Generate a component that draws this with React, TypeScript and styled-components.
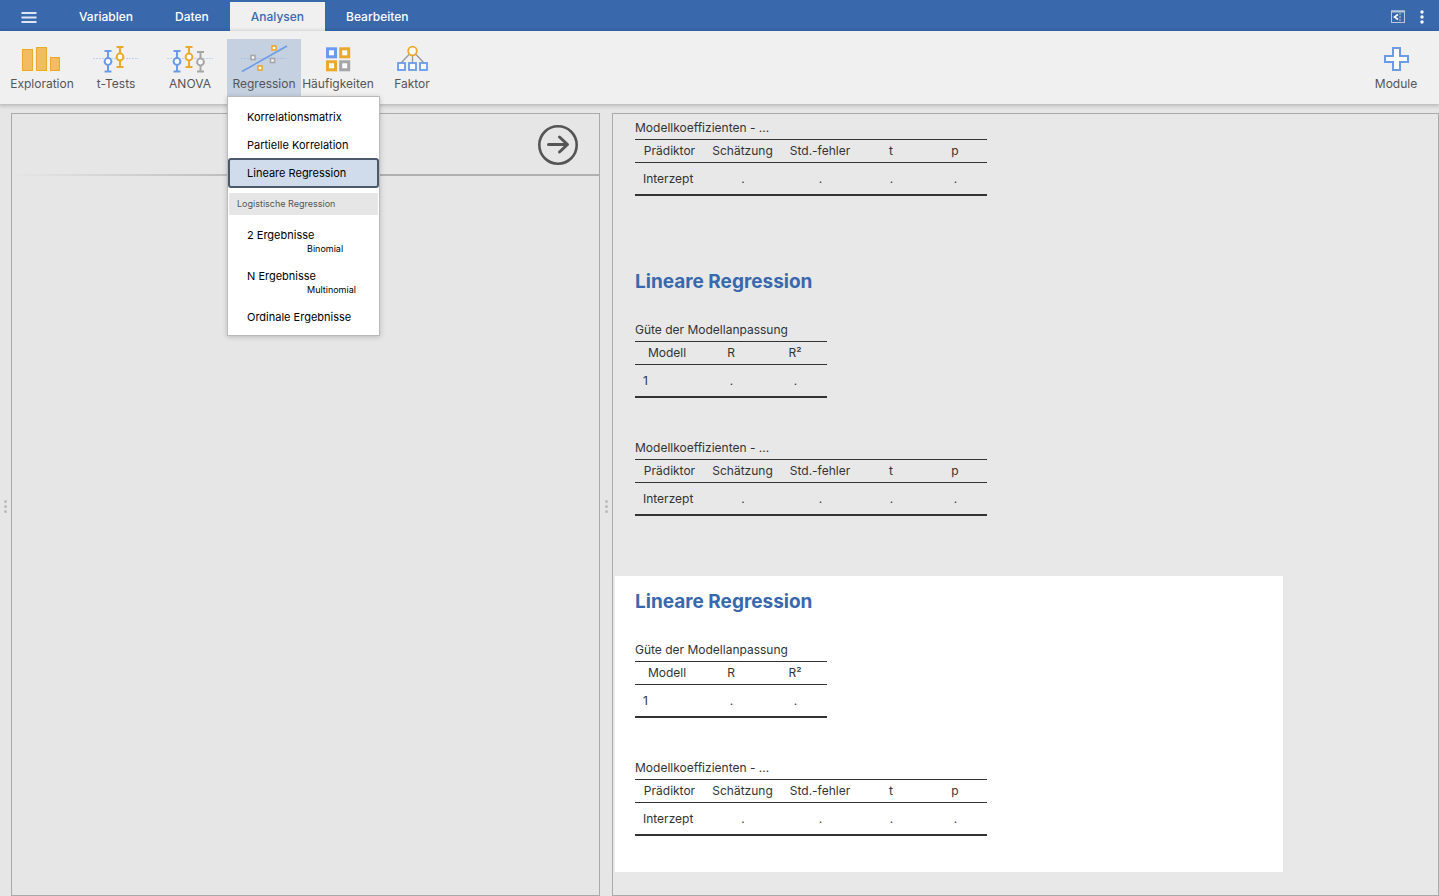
import React from 'react';
import styled, { createGlobalStyle } from 'styled-components';

const BLUE = '#3968ad';
const ICON_BLUE = '#6b9be8';
const ICON_ORANGE = '#eba92c';
const ICON_GREY = '#a6a6a6';

const GlobalStyle = createGlobalStyle`
  *, *::before, *::after { box-sizing: border-box; }
  body {
    margin: 0;
    font-family: Inter, "Liberation Sans", sans-serif;
    font-size: 12px;
    color: #333;
    background: #e6e6e6;
  }
  button { font: inherit; color: inherit; border: 0; padding: 0; background: none; cursor: pointer; }
  svg { display: block; }
`;

const Shell = styled.div`
  display: flex;
  flex-direction: column;
  height: 100vh;
`;

const TitleBar = styled.header`
  display: flex;
  align-items: flex-end;
  height: 31px;
  flex: none;
  padding-right: 5px;
  background: ${BLUE};
  color: #fff;
`;

const BarButton = styled.button<{ $width: number }>`
  display: flex;
  align-items: center;
  justify-content: center;
  width: ${p => p.$width}px;
  height: 29px;
`;

const Tabs = styled.nav`
  display: flex;
  flex: 1;
`;

const Tab = styled.button<{ $active?: boolean }>`
  height: 29px;
  padding: 0 21px;
  font-size: 12px;
  font-weight: 500;
  line-height: 29px;
  color: ${p => (p.$active ? BLUE : '#fff')};
  background: ${p => (p.$active ? '#f0f0f0' : 'transparent')};
`;

const Toolbar = styled.div`
  position: relative;
  z-index: 2;
  display: flex;
  flex: none;
  height: 73px;
  padding: 8px 6px 8px 5px;
  background: #f0f0f0;
  box-shadow: 0 1px 4px 1px rgba(0, 0, 0, 0.2);
`;

const ToolSlot = styled.div<{ $end?: boolean }>`
  position: relative;
  width: 74px;
  margin-left: ${p => (p.$end ? 'auto' : '0')};
`;

const Tool = styled.button<{ $open?: boolean }>`
  display: flex;
  flex-direction: column;
  align-items: center;
  width: 100%;
  height: 57px;
  padding-top: 4px;
  gap: 1px;
  font-size: 12px;
  line-height: 16px;
  color: #555;
  white-space: nowrap;
  background: ${p => (p.$open ? '#c5d0e0' : 'transparent')};
  svg { flex: none; }
`;

const Menu = styled.div`
  position: absolute;
  top: 57px;
  left: 0;
  width: 153px;
  padding: 6px 1px 4px;
  background: #fff;
  border: 1px solid #bbb;
  box-shadow: 0 1px 5px rgba(0, 0, 0, 0.2);
  color: #000;
`;

const MenuItem = styled.button<{ $selected?: boolean }>`
  display: block;
  width: 100%;
  padding: 6px 0 6px 18px;
  font-size: 11px;
  line-height: 16px;
  text-align: left;
  border-radius: 2px;
  background: ${p => (p.$selected ? '#d0dcec' : 'transparent')};
  outline: ${p => (p.$selected ? '2px solid #4b596c' : 'none')};
  outline-offset: -1px;
`;

const MenuNote = styled.span`
  display: block;
  padding: 0 0 2px 60px;
  font-size: 9px;
  line-height: 11px;
`;

const MenuGroup = styled.div`
  margin: 6px 0;
  padding-left: 8px;
  font-size: 9px;
  line-height: 22px;
  color: #555;
  background: #e6e6e6;
`;

const Workspace = styled.main`
  display: flex;
  flex: 1;
  min-height: 0;
  padding-top: 9px;
`;

const Splitter = styled.div<{ $width: number }>`
  display: flex;
  flex-direction: column;
  align-items: center;
  justify-content: center;
  gap: 2px;
  flex: none;
  width: ${p => p.$width}px;
  padding-top: 4px;
`;

const Dot = styled.i`
  width: 3px;
  height: 3px;
  border-radius: 50%;
  background: #bbb;
`;

const OptionsPane = styled.section`
  flex: 587 1 0;
  min-width: 0;
  border: 1px solid #aaa;
`;

const OptionsHeader = styled.div`
  display: flex;
  align-items: center;
  justify-content: flex-end;
  height: 62px;
  padding: 2px 20px 0 0;
  border-bottom: 2px solid;
  border-image: linear-gradient(to right, transparent, #b0b0b0 50%) 1;
`;

const ResultsPane = styled.section`
  flex: 821 1 0;
  min-width: 0;
  overflow: hidden;
  padding: 5px 2px 0;
  border: 1px solid #aaa;
  background: #e8e8e8;
`;

const Result = styled.article<{ $active?: boolean }>`
  max-width: 668px;
  margin-bottom: 24px;
  padding: 0 20px 36px;
  background: ${p => (p.$active ? '#fff' : 'transparent')};
`;

const Heading = styled.h1`
  margin: 0 0 26px;
  padding-top: 13px;
  font-size: 19px;
  line-height: 26px;
  font-weight: 700;
  color: ${BLUE};
`;

const Table = styled.table`
  table-layout: fixed;
  border-spacing: 0;
  & + & { margin-top: 41px; }
  caption {
    padding: 1px 0 3px;
    line-height: 16px;
    text-align: left;
    white-space: nowrap;
  }
  th {
    height: 24px;
    padding: 0;
    font-weight: 400;
    line-height: 16px;
    border-top: 1px solid #333;
    border-bottom: 1px solid #333;
  }
  td {
    height: 33px;
    padding: 0 0 0 1px;
    text-align: center;
    line-height: 16px;
    border-bottom: 2px solid #333;
  }
  td:first-child { padding-left: 8px; text-align: left; }
`;

interface DataTableProps {
  caption: string;
  widths: number[];
  head: string[];
  row: string[];
}

const DataTable = ({ caption, widths, head, row }: DataTableProps) => (
  <Table style={{ width: widths.reduce((a, b) => a + b, 0) }}>
    <caption>{caption}</caption>
    <colgroup>{widths.map((w, i) => <col key={i} style={{ width: w }} />)}</colgroup>
    <thead><tr>{head.map(h => <th key={h} scope="col">{h}</th>)}</tr></thead>
    <tbody><tr>{row.map((c, i) => <td key={i}>{c}</td>)}</tr></tbody>
  </Table>
);

const FitTable = () => (
  <DataTable caption="Güte der Modellanpassung" widths={[64, 64, 64]} head={['Modell', 'R', 'R²']} row={['1', '.', '.']} />
);

const CoefficientTable = () => (
  <DataTable
    caption="Modellkoeffizienten - ..."
    widths={[69, 77, 78, 64, 64]}
    head={['Prädiktor', 'Schätzung', 'Std.-fehler', 't', 'p']}
    row={['Interzept', '.', '.', '.', '.']}
  />
);

const Grip = ({ width }: { width: number }) => (
  <Splitter $width={width}><Dot /><Dot /><Dot /></Splitter>
);

/* Toolbar icons share a 48x32 canvas. */
const Canvas = ({ children }: { children: React.ReactNode }) => (
  <svg width="48" height="32" viewBox="0 0 48 32" fill="none" aria-hidden="true">{children}</svg>
);

const ErrorBar = ({ x, top, mid, bottom, color }: { x: number; top: number; mid: number; bottom: number; color: string }) => (
  <g stroke={color} strokeWidth="2">
    <path d={`M${x - 3.5} ${top}h7M${x - 3.5} ${bottom}h7M${x} ${top}V${bottom}`} />
    <circle cx={x} cy={mid} r="3.4" fill="#fff" />
  </g>
);

const Dotted = () => <path d="M1.5 15.5H47" stroke="#8fb0e4" strokeDasharray="1 2" />;

const Square = ({ x, y, size, color, line = 2 }: { x: number; y: number; size: number; color: string; line?: number }) => (
  <rect x={x} y={y} width={size} height={size} stroke={color} strokeWidth={line} fill="#fff" />
);

const ExplorationIcon = () => (
  <Canvas>
    <g fill="#f2bd62" stroke={ICON_ORANGE}>
      <rect x="4.5" y="6.5" width="10" height="21" />
      <rect x="18.5" y="4.5" width="10" height="23" />
      <rect x="32.5" y="14.5" width="9" height="13" />
    </g>
  </Canvas>
);

const TTestIcon = () => (
  <Canvas>
    <Dotted />
    <ErrorBar x={16} top={8} mid={18.5} bottom={28.5} color={ICON_BLUE} />
    <ErrorBar x={28} top={4} mid={14} bottom={24} color={ICON_ORANGE} />
  </Canvas>
);

const AnovaIcon = () => (
  <Canvas>
    <Dotted />
    <ErrorBar x={11} top={8} mid={18.5} bottom={28.5} color={ICON_BLUE} />
    <ErrorBar x={23} top={4} mid={14} bottom={24} color={ICON_ORANGE} />
    <ErrorBar x={34.5} top={9} mid={19} bottom={28.5} color={ICON_GREY} />
  </Canvas>
);

const RegressionIcon = () => (
  <Canvas>
    <Dotted />
    <path d="M2 28.5L47 3" stroke={ICON_BLUE} strokeWidth="1.6" />
    <Square x={32} y={3} size={4} color={ICON_ORANGE} line={1.6} />
    <Square x={11} y={12.5} size={4} color={ICON_GREY} line={1.6} />
    <Square x={30.5} y={15.5} size={4} color={ICON_GREY} line={1.6} />
    <Square x={18} y={23} size={4} color={ICON_ORANGE} line={1.6} />
  </Canvas>
);

const FrequencyIcon = () => (
  <Canvas>
    <Square x={13.5} y={5.8} size={8} color={ICON_BLUE} line={3} />
    <Square x={26.7} y={5.8} size={8} color={ICON_ORANGE} line={3} />
    <Square x={13.5} y={18.8} size={8} color={ICON_ORANGE} line={3} />
    <Square x={26.7} y={18.8} size={8} color={ICON_GREY} line={3} />
  </Canvas>
);

const FactorIcon = () => (
  <Canvas>
    <path d="M21 11.5L13 20M24.5 12v8M28 11.5L36 20" stroke="#999" strokeWidth="1.3" />
    <circle cx="24.5" cy="8" r="4.3" fill="#fff" stroke={ICON_ORANGE} strokeWidth="1.8" />
    <Square x={10} y={20} size={7} color={ICON_BLUE} line={1.8} />
    <Square x={21} y={20} size={7} color={ICON_BLUE} line={1.8} />
    <Square x={32} y={20} size={7} color={ICON_BLUE} line={1.8} />
  </Canvas>
);

const ModuleIcon = () => (
  <Canvas>
    <path d="M21 5h7v8h8v6h-8v8h-7v-8h-8v-6h8z" fill="#fff" stroke={ICON_BLUE} strokeWidth="2" />
  </Canvas>
);

const App = () => (
  <Shell>
    <GlobalStyle />
    <TitleBar>
      <BarButton $width={58} aria-label="Menü">
        <svg width="16" height="12" viewBox="0 0 16 12" aria-hidden="true">
          <path d="M0.500 2h15M0.500 6.500h15M0.500 11h15" stroke="#dde6f3" strokeWidth="2" />
        </svg>
      </BarButton>
      <Tabs>
        <Tab>Variablen</Tab>
        <Tab>Daten</Tab>
        <Tab $active>Analysen</Tab>
        <Tab>Bearbeiten</Tab>
      </Tabs>
      <BarButton $width={24} aria-label="Ansicht">
        <svg width="16" height="16" viewBox="0 0 16 16" fill="none" aria-hidden="true">
          <rect x="1.500" y="2" width="13" height="11.500" stroke="#b7c9e4" />
          <path d="M1 2.500h14" stroke="#b7c9e4" strokeWidth="2" />
          <path d="M8 5.500L4.500 8l3.500 2.500" stroke="#fff" strokeWidth="1.600" />
          <path d="M10 4v9" stroke="#b7c9e4" strokeDasharray="2 1" />
        </svg>
      </BarButton>
      <BarButton $width={24} aria-label="Weitere Optionen">
        <svg width="4" height="14" viewBox="0 0 4 14" fill="#fff" aria-hidden="true">
          <circle cx="2" cy="2" r="1.700" /><circle cx="2" cy="7" r="1.700" /><circle cx="2" cy="12" r="1.700" />
        </svg>
      </BarButton>
    </TitleBar>

    <Toolbar>
      <ToolSlot><Tool><ExplorationIcon />Exploration</Tool></ToolSlot>
      <ToolSlot><Tool><TTestIcon />t-Tests</Tool></ToolSlot>
      <ToolSlot><Tool><AnovaIcon />ANOVA</Tool></ToolSlot>
      <ToolSlot>
        <Tool $open aria-expanded="true"><RegressionIcon />Regression</Tool>
        <Menu>
          <MenuItem>Korrelationsmatrix</MenuItem>
          <MenuItem>Partielle Korrelation</MenuItem>
          <MenuItem $selected>Lineare Regression</MenuItem>
          <MenuGroup>Logistische Regression</MenuGroup>
          <MenuItem>2 Ergebnisse<MenuNote>Binomial</MenuNote></MenuItem>
          <MenuItem>N Ergebnisse<MenuNote>Multinomial</MenuNote></MenuItem>
          <MenuItem>Ordinale Ergebnisse</MenuItem>
        </Menu>
      </ToolSlot>
      <ToolSlot><Tool><FrequencyIcon />Häufigkeiten</Tool></ToolSlot>
      <ToolSlot><Tool><FactorIcon />Faktor</Tool></ToolSlot>
      <ToolSlot $end><Tool><ModuleIcon />Module</Tool></ToolSlot>
    </Toolbar>

    <Workspace>
      <Grip width={11} />
      <OptionsPane>
        <OptionsHeader>
          <button aria-label="Schließen">
            <svg width="42" height="42" viewBox="0 0 42 42" fill="none" stroke="#555" aria-hidden="true">
              <circle cx="21" cy="21" r="18.700" strokeWidth="2.600" />
              <path d="M11.500 20.500H30M22.500 13L30.500 20.500L22.500 28" strokeWidth="3" strokeLinecap="round" strokeLinejoin="round" />
            </svg>
          </button>
        </OptionsHeader>
      </OptionsPane>
      <Grip width={12} />
      <ResultsPane>
        <Result><CoefficientTable /></Result>
        <Result>
          <Heading>Lineare Regression</Heading>
          <FitTable />
          <CoefficientTable />
        </Result>
        <Result $active>
          <Heading>Lineare Regression</Heading>
          <FitTable />
          <CoefficientTable />
        </Result>
      </ResultsPane>
    </Workspace>
  </Shell>
);

export default App;
